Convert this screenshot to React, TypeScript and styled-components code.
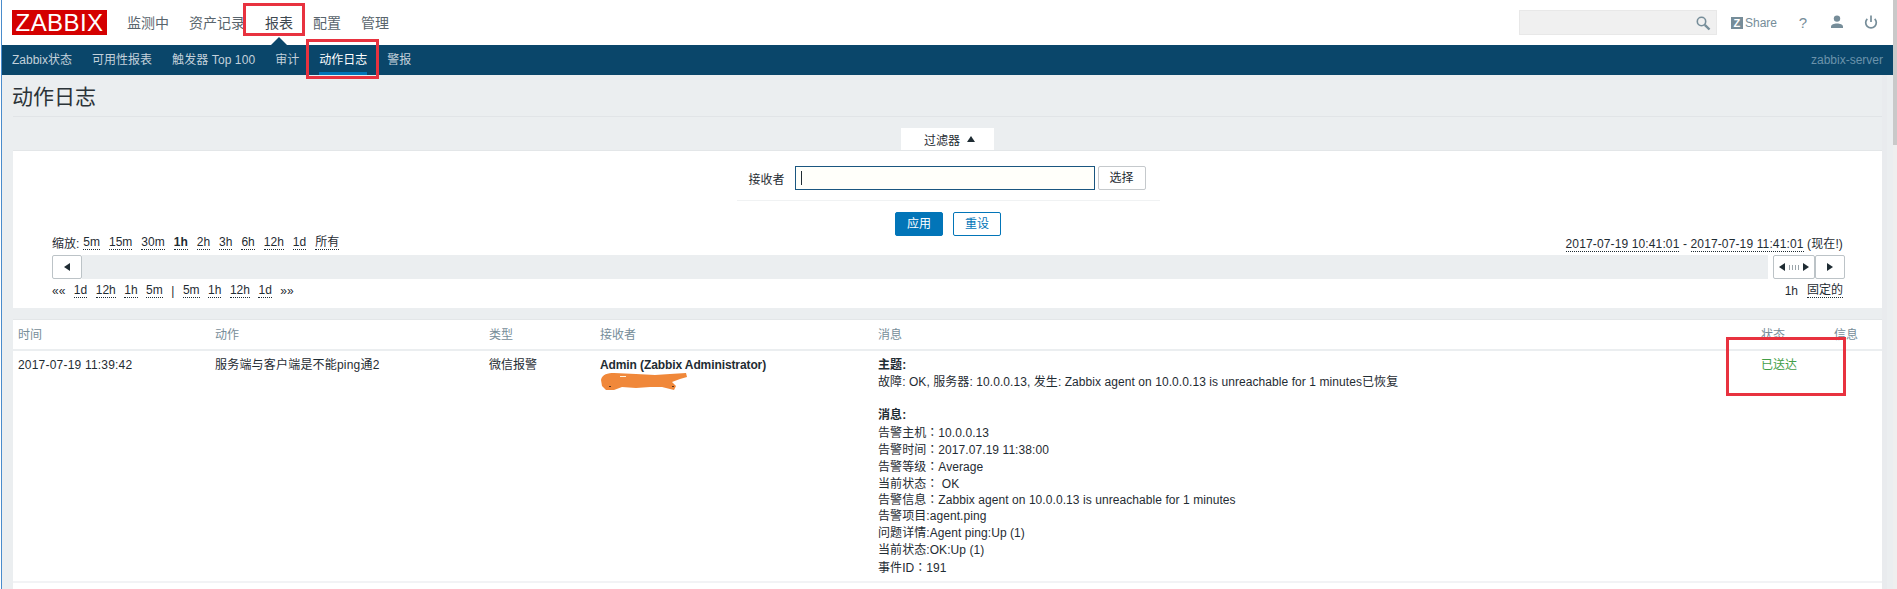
import React from "react";
import styled, { createGlobalStyle } from "styled-components";

const Global = createGlobalStyle`
  html, body { margin: 0; padding: 0; background: #fff; overflow: hidden; }
  body { font-family: "Liberation Sans", "Noto Sans CJK SC", sans-serif; font-size: 12px; color: #1f2c33; }
  * { box-sizing: border-box; }
`;

const Shell = styled.div`
  position: relative;
  display: flex;
  width: 1897px;
  height: 589px;
  overflow: hidden;
`;
const BlueEdge = styled.div`
  flex: 0 0 2px;
  border-left: 1px solid #fff;
  background: #4a8ccc;
`;
const Page = styled.div`
  flex: 0 0 1891px;
  display: flex;
  flex-direction: column;
  background: #ebeef0;
`;
const ScrollTrack = styled.div`
  flex: 0 0 4px;
  background: linear-gradient(#c9c9c9 0 145px, #efefef 145px);
`;

const TopNav = styled.header`
  height: 45px;
  flex: none;
  display: flex;
  align-items: center;
  background: #fff;
  padding-left: 10px;
`;
const Logo = styled.div`
  width: 95px;
  height: 25px;
  margin-right: 20px;
  background: #d40000;
  color: #fff;
  font-size: 24px;
  letter-spacing: 0.4px;
  line-height: 25px;
  text-align: center;
`;
const MainMenu = styled.nav`
  display: flex;
  gap: 20px;
`;
const MainItem = styled.span<{ $active?: boolean }>`
  position: relative;
  font-size: 14px;
  line-height: 20px;
  color: #59656d;
  ${(p) => p.$active && `
    color: #3d4850;
    &::after {
      content: "";
      position: absolute;
      left: 6px;
      bottom: -12px;
      border: 8px solid transparent;
      border-top: 0;
      border-bottom-color: #0a466a;
    }
  `}
`;
const TopRight = styled.div`
  margin-left: auto;
  display: flex;
  align-items: center;
`;
const SearchBox = styled.div`
  width: 198px;
  height: 25px;
  display: flex;
  align-items: center;
  justify-content: flex-end;
  padding-right: 5px;
  background: #f0f0f0;
  border: 1px solid #e8e8e8;
  color: #768d99;
`;
const ShareLink = styled.div`
  display: flex;
  align-items: center;
  gap: 2px;
  margin-left: 14px;
  color: #768d99;
  font-size: 12px;
`;
const ZBadge = styled.span`
  width: 12px;
  height: 12px;
  background: #768d99;
  color: #fff;
  font-size: 11px;
  font-weight: bold;
  line-height: 12px;
  text-align: center;
`;
const IconSlot = styled.div`
  width: 34px;
  display: flex;
  justify-content: center;
  color: #768d99;
  font-size: 15px;
  line-height: 16px;
`;
const TopIcons = styled.div`
  display: flex;
  margin-left: 9px;
  margin-right: 5px;
`;

const SubNav = styled.nav`
  height: 30px;
  flex: none;
  display: flex;
  align-items: center;
  gap: 20px;
  padding-left: 10px;
  padding-right: 10px;
  background: #0a466a;
`;
const SubItem = styled.span<{ $active?: boolean; $wide?: boolean }>`
  height: 30px;
  line-height: 30px;
  color: ${(p) => (p.$active ? "#fff" : "#c3d1db")};
  ${(p) => p.$active && "box-shadow: inset 0 -3px 0 #0275b8;"}
  ${(p) => p.$wide && "letter-spacing: 0.1px;"}
`;
const ServerName = styled.span`
  margin-left: auto;
  color: #6b93ab;
`;

const Content = styled.main`
  flex: 1;
  padding: 0 11px;
`;
const TitleBar = styled.div`
  height: 42px;
  display: flex;
  align-items: center;
  padding-bottom: 2px;
  border-bottom: 1px solid #e1e4e7;
`;
const Title = styled.h1`
  margin: 0 0 0 -1px;
  font-size: 21px;
  font-weight: normal;
  color: #2b3338;
`;
const FilterTabRow = styled.div`
  display: flex;
  justify-content: center;
  margin-top: 11px;
`;
const FilterTab = styled.div`
  width: 93px;
  height: 22px;
  display: flex;
  align-items: center;
  justify-content: center;
  gap: 7px;
  padding-left: 4px;
  background: #fff;
`;
const Panel = styled.section`
  background: #fff;
  border-top: 1px solid #e3e6e8;
`;
const FilterPanel = styled(Panel)`
  height: 158px;
  padding-top: 15px;
`;
const FormRow = styled.div`
  display: flex;
  align-items: center;
  justify-content: center;
  padding-right: 1px;
  height: 24px;
`;
const Label = styled.label`
  margin-right: 10px;
`;
const TextField = styled.div`
  width: 300px;
  height: 24px;
  padding: 4px 5px;
  border: 1px solid #1a5680;
  background: #fffffa;
`;
const Caret = styled.div`
  width: 1px;
  height: 14px;
  background: #1f2c33;
`;
const Btn = styled.div<{ $kind?: "plain" | "primary" | "outline" }>`
  width: 48px;
  height: 24px;
  line-height: 22px;
  text-align: center;
  border-radius: 2px;
  border: 1px solid ${(p) => (p.$kind === "plain" || !p.$kind ? "#c5c9cc" : "#0275b8")};
  background: ${(p) => (p.$kind === "primary" ? "#0275b8" : "#fff")};
  color: ${(p) => (p.$kind === "primary" ? "#fff" : p.$kind === "outline" ? "#0275b8" : "#1f2c33")};
`;
const SelectBtn = styled(Btn)`
  margin-left: 3px;
`;
const Divider = styled.div`
  width: 423px;
  height: 1px;
  margin: 10px 0 11px 724px;
  background: #f0f2f3;
`;
const FormButtons = styled.div`
  display: flex;
  justify-content: center;
  gap: 10px;
  padding-left: 1px;
`;
const Timeline = styled.div`
  padding: 0 37px 0 39px;
`;
const TimeRow = styled.div<{ $h: number; $lift?: number }>`
  display: flex;
  align-items: center;
  justify-content: space-between;
  height: ${(p) => p.$h}px;
  padding-bottom: ${(p) => p.$lift ?? 0}px;
`;
const Links = styled.div`
  display: flex;
  align-items: center;
  gap: 9px;
`;
const BackLinks = styled(Links)`
  gap: 8.5px;
`;
const ZoomLabel = styled.span`
  margin-right: -5px;
`;
const RightNote = styled.div`
  margin-right: 2px;
  letter-spacing: 0.13px;
`;
const RightLinks = styled(Links)`
  margin-right: 2px;
`;
const Dotted = styled.span<{ $bold?: boolean }>`
  border-bottom: 1px dotted #1f2c33;
  line-height: 14px;
  font-weight: ${(p) => (p.$bold ? "bold" : "normal")};
`;
const Track = styled.div`
  display: flex;
  align-items: stretch;
  height: 24px;
`;
const SliderBar = styled.div`
  flex: 1;
  background: #ebeef0;
`;
const StepBtn = styled.div<{ $w: number; $gap?: number }>`
  width: ${(p) => p.$w}px;
  margin-left: ${(p) => p.$gap ?? 0}px;
  display: flex;
  align-items: center;
  justify-content: center;
  gap: 2px;
  background: #fff;
  border: 1px solid #bcc3c7;
  border-radius: 2px;
`;
const Tri = styled.i<{ $dir: "left" | "right" | "up" }>`
  width: 0;
  height: 0;
  border-style: solid;
  ${(p) =>
    p.$dir === "left"
      ? "border-width: 4.5px 6px 4.5px 0; border-color: transparent #1f2c33 transparent transparent;"
      : p.$dir === "right"
        ? "border-width: 4.5px 0 4.5px 6px; border-color: transparent transparent transparent #1f2c33;"
        : "border-width: 0 4.5px 6px 4.5px; border-color: transparent transparent #1f2c33 transparent;"}
`;
const Grip = styled.span`
  width: 10px;
  height: 5px;
  margin: 0 2px;
  background: repeating-linear-gradient(90deg, #9aa4aa 0 1px, transparent 1px 3px);
`;

const LogPanel = styled(Panel)`
  margin-top: 11px;
  min-height: 270px;
`;
const LogTable = styled.table`
  width: 100%;
  table-layout: fixed;
  border-collapse: collapse;
`;
const Th = styled.th<{ $w: number }>`
  width: ${(p) => p.$w}px;
  height: 30px;
  padding: 0 5px 2px;
  text-align: left;
  font-weight: normal;
  color: #768d99;
  border-bottom: 2px solid #ebeef0;
`;
const Td = styled.td<{ $track?: number }>`
  padding: 6px 5px;
  vertical-align: top;
  line-height: 16.8px;
  letter-spacing: ${(p) => p.$track ?? 0}px;
  border-bottom: 2px solid #f2f3f5;
`;
const Strong = styled.strong`
  display: block;
  font-weight: bold;
`;
const AdminName = styled(Strong)`
  letter-spacing: -0.1px;
`;
const MessageLine = styled.div`
  height: 16.8px;
  white-space: pre;
`;
const Colon = styled.span`
  font-family: "Noto Sans CJK TC", sans-serif;
`;
const Delivered = styled.span`
  color: #429e47;
`;
const Scribble = styled.svg`
  display: block;
  margin-top: -2px;
`;
const Annotation = styled.div<{ $x: number; $y: number; $w: number; $h: number }>`
  position: absolute;
  left: ${(p) => p.$x}px;
  top: ${(p) => p.$y}px;
  width: ${(p) => p.$w}px;
  height: ${(p) => p.$h}px;
  border: 3px solid #e8323f;
  pointer-events: none;
`;
const Gutter = styled.div`
  position: absolute;
  left: 1882px;
  top: 75px;
  width: 5px;
  height: 514px;
  background: #e9ebee;
`;

const SearchIcon = () => (
  <svg width="16" height="16" viewBox="0 0 16 16" fill="none" stroke="currentColor">
    <circle cx="6.5" cy="6.5" r="4.2" strokeWidth="1.6" />
    <path d="M9.8 9.8 14.5 14.5" strokeWidth="2.4" />
  </svg>
);
const UserIcon = () => (
  <svg width="14" height="14" viewBox="0 0 14 14" fill="currentColor">
    <circle cx="7" cy="3.6" r="3.2" />
    <path d="M1 13v-1.4C1 9.6 4 8.4 7 8.4s6 1.200 6 3.200V13Z" />
  </svg>
);
const PowerIcon = () => (
  <svg width="14" height="14" viewBox="0 0 14 14" fill="none" stroke="currentColor" strokeWidth="1.7">
    <path d="M3.300 3.800a5.300 5.300 0 1 0 7.400 0" />
    <path d="M7 0.500V7" />
  </svg>
);

const zoomLinks = ["5m", "15m", "30m", "1h", "2h", "3h", "6h", "12h", "1d", "所有"];
const backLinks = ["1d", "12h", "1h", "5m"];
const fwdLinks = ["5m", "1h", "12h", "1d"];
const messageLines: [string, string, string][] = [
  ["告警主机", "：", "10.0.0.13"],
  ["告警时间", "：", "2017.07.19 11:38:00"],
  ["告警等级", "：", "Average"],
  ["当前状态", "：", " OK"],
  ["告警信息", "：", "Zabbix agent on 10.0.0.13 is unreachable for 1 minutes"],
  ["告警项目", ":", "agent.ping"],
  ["问题详情", ":", "Agent ping:Up (1)"],
  ["当前状态", ":", "OK:Up (1)"],
  ["事件ID", "：", "191"],
];

export default function App() {
  return (
    <Shell>
      <Global />
      <BlueEdge />
      <Page>
        <TopNav>
          <Logo>ZABBIX</Logo>
          <MainMenu>
            <MainItem>监测中</MainItem>
            <MainItem>资产记录</MainItem>
            <MainItem $active>报表</MainItem>
            <MainItem>配置</MainItem>
            <MainItem>管理</MainItem>
          </MainMenu>
          <TopRight>
            <SearchBox>
              <SearchIcon />
            </SearchBox>
            <ShareLink>
              <ZBadge>Z</ZBadge>
              Share
            </ShareLink>
            <TopIcons>
              <IconSlot>?</IconSlot>
              <IconSlot>
                <UserIcon />
              </IconSlot>
              <IconSlot>
                <PowerIcon />
              </IconSlot>
            </TopIcons>
          </TopRight>
        </TopNav>
        <SubNav>
          <SubItem>Zabbix状态</SubItem>
          <SubItem>可用性报表</SubItem>
          <SubItem $wide>触发器 Top 100</SubItem>
          <SubItem>审计</SubItem>
          <SubItem $active>动作日志</SubItem>
          <SubItem>警报</SubItem>
          <ServerName>zabbix-server</ServerName>
        </SubNav>
        <Content>
          <TitleBar>
            <Title>动作日志</Title>
          </TitleBar>
          <FilterTabRow>
            <FilterTab>
              过滤器 <Tri $dir="up" />
            </FilterTab>
          </FilterTabRow>
          <FilterPanel>
            <FormRow>
              <Label>接收者</Label>
              <TextField>
                <Caret />
              </TextField>
              <SelectBtn>选择</SelectBtn>
            </FormRow>
            <Divider />
            <FormButtons>
              <Btn $kind="primary">应用</Btn>
              <Btn $kind="outline">重设</Btn>
            </FormButtons>
            <Timeline>
              <TimeRow $h={19} $lift={7}>
                <Links>
                  <ZoomLabel>缩放:</ZoomLabel>
                  {zoomLinks.map((z) => (
                    <Dotted key={z} $bold={z === "1h"}>
                      {z}
                    </Dotted>
                  ))}
                </Links>
                <RightNote>
                  <Dotted>2017-07-19 10:41:01</Dotted> - <Dotted>2017-07-19 11:41:01</Dotted> (现在!)
                </RightNote>
              </TimeRow>
              <Track>
                <StepBtn $w={30}>
                  <Tri $dir="left" />
                </StepBtn>
                <SliderBar />
                <StepBtn $w={42} $gap={5}>
                  <Tri $dir="left" />
                  <Grip />
                  <Tri $dir="right" />
                </StepBtn>
                <StepBtn $w={30}>
                  <Tri $dir="right" />
                </StepBtn>
              </Track>
              <TimeRow $h={23}>
                <BackLinks>
                  <span>««</span>
                  {backLinks.map((z) => (
                    <Dotted key={z}>{z}</Dotted>
                  ))}
                  <span>|</span>
                  {fwdLinks.map((z) => (
                    <Dotted key={"f" + z}>{z}</Dotted>
                  ))}
                  <span>»»</span>
                </BackLinks>
                <RightLinks>
                  <span>1h</span>
                  <Dotted>固定的</Dotted>
                </RightLinks>
              </TimeRow>
            </Timeline>
          </FilterPanel>
          <LogPanel>
            <LogTable>
              <thead>
                <tr>
                  <Th $w={197}>时间</Th>
                  <Th $w={274}>动作</Th>
                  <Th $w={111}>类型</Th>
                  <Th $w={278}>接收者</Th>
                  <Th $w={883}>消息</Th>
                  <Th $w={73}>状态</Th>
                  <Th $w={53}>信息</Th>
                </tr>
              </thead>
              <tbody>
                <tr>
                  <Td $track={0.2}>2017-07-19 11:39:42</Td>
                  <Td $track={0.2}>服务端与客户端是不能ping通2</Td>
                  <Td>微信报警</Td>
                  <Td>
                    <AdminName>Admin (Zabbix Administrator)</AdminName>
                    <Scribble width="88" height="19" viewBox="0 0 88 19">
                      <path
                        d="M1 8C2 2 8 1 14 1L36 2 55 3 70 2 86 1 87 5 80 7 72 10 76 14 74 18 62 15 50 15 36 16 22 15 14 18 6 18 2 14Z"
                        fill="#f0883a"
                      />
                      <path d="M20 4.500h6" stroke="#fff3dc" strokeWidth="1" />
                      <path d="M9 14.500h2M72 14.500h2" stroke="#5a3520" strokeWidth="1" />
                    </Scribble>
                  </Td>
                  <Td $track={0.07}>
                    <Strong>主题:</Strong>
                    <div>故障: OK, 服务器: 10.0.0.13, 发生: Zabbix agent on 10.0.0.13 is unreachable for 1 minutes已恢复</div>
                    <br />
                    <Strong>消息:</Strong>
                    {messageLines.map(([head, colon, tail], i) => (
                      <MessageLine key={i}>
                        {head}
                        {colon === "：" ? <Colon>{colon}</Colon> : colon}
                        {tail}
                      </MessageLine>
                    ))}
                  </Td>
                  <Td>
                    <Delivered>已送达</Delivered>
                  </Td>
                  <Td />
                </tr>
              </tbody>
            </LogTable>
          </LogPanel>
        </Content>
      </Page>
      <ScrollTrack />
      <Gutter />
      <Annotation $x={243} $y={3} $w={62} $h={33} />
      <Annotation $x={306} $y={39} $w={73} $h={40} />
      <Annotation $x={1726} $y={337} $w={120} $h={59} />
    </Shell>
  );
}
